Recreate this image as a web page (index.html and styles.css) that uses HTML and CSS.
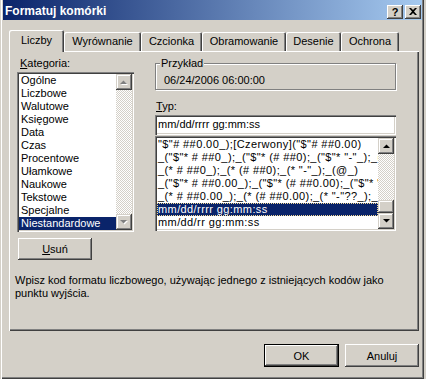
FILE: index.html
```html
<!DOCTYPE html>
<html lang="pl">
<head>
  <meta charset="UTF-8" />
  <title>Formatuj komórki</title>
  <link rel="stylesheet" href="styles.css">
</head>
<body>

  <div class="window">
    <div class="titlebar">
      <span class="title">Formatuj komórki</span>
      <div class="caption-buttons">
        <button class="caption-btn help">?</button>
        <button class="caption-btn close">
          <svg width="8" height="7" viewBox="0 0 8 7"><path d="M0 0h2l2 2 2-2h2L5 3.5 8 7H6L4 5 2 7H0l3-3.5z" fill="#000"/></svg>
        </button>
      </div>
    </div>

    <div class="content">
      <div class="tabs">
        <div class="tab active">Liczby</div>
        <div class="tab">Wyrównanie</div>
        <div class="tab">Czcionka</div>
        <div class="tab">Obramowanie</div>
        <div class="tab">Desenie</div>
        <div class="tab">Ochrona</div>
      </div>

      <div class="panel">
        <div class="panel-top">
          <div class="col-left">
            <div class="label label-cat"><u>K</u>ategoria:</div>
            <div class="listbox category">
              <ul class="items">
                <li>Ogólne</li>
                <li>Liczbowe</li>
                <li>Walutowe</li>
                <li>Księgowe</li>
                <li>Data</li>
                <li>Czas</li>
                <li>Procentowe</li>
                <li>Ułamkowe</li>
                <li>Naukowe</li>
                <li>Tekstowe</li>
                <li>Specjalne</li>
                <li class="selected">Niestandardowe</li>
              </ul>
              <div class="scrollbar disabled">
                <div class="scroll-btn">
                  <svg width="8" height="5" viewBox="0 0 8 5"><path d="M1 5h7L4.5 1.5z" fill="#fff"/><path d="M0 4h7L3.5 0.5z" fill="#808080"/></svg>
                </div>
                <div class="track"></div>
                <div class="scroll-btn">
                  <svg width="8" height="5" viewBox="0 0 8 5"><path d="M1 1h7L4.5 4.5z" fill="#fff"/><path d="M0 0h7L3.5 3.5z" fill="#808080"/></svg>
                </div>
              </div>
            </div>
            <button class="btn btn-usun"><u>U</u>suń</button>
          </div>

          <div class="col-right">
            <div class="group">
              <div class="group-label">Przykład</div>
              <div class="sample">06/24/2006 06:00:00</div>
            </div>
            <div class="label label-typ"><u>T</u>yp:</div>
            <div class="textbox">mm/dd/rrrr gg:mm:ss</div>
            <div class="listbox formats">
              <ul class="items">
                <li>"$"# ##0.00_);[Czerwony]("$"# ##0.00)</li>
                <li>_("$"* # ##0_);_("$"* (# ##0);_("$"* "-"_);_(@_)</li>
                <li>_(* # ##0_);_(* (# ##0);_(* "-"_);_(@_)</li>
                <li>_("$"* # ##0.00_);_("$"* (# ##0.00);_("$"* "-"??_);_(@_)</li>
                <li>_(* # ##0.00_);_(* (# ##0.00);_(* "-"??_);_(@_)</li>
                <li class="selected focused">mm/dd/rrrr gg:mm:ss</li>
                <li>mm/dd/rr gg:mm:ss</li>
              </ul>
              <div class="scrollbar">
                <div class="scroll-btn">
                  <svg width="7" height="4" viewBox="0 0 7 4"><path d="M0 4h7L3.5 0.5z" fill="#000"/></svg>
                </div>
                <div class="track"></div>
                <div class="thumb"></div>
                <div class="scroll-btn">
                  <svg width="7" height="4" viewBox="0 0 7 4"><path d="M0 0h7L3.5 3.5z" fill="#000"/></svg>
                </div>
              </div>
            </div>
          </div>
        </div>

        <p class="hint">Wpisz kod formatu liczbowego, używając jednego z istniejących kodów jako<br>punktu wyjścia.</p>
      </div>

      <div class="actions">
        <button class="btn btn-default">OK</button>
        <button class="btn btn-cancel">Anuluj</button>
      </div>
    </div>
  </div>

</body>
</html>
```

FILE: styles.css
```css
* {
  box-sizing: border-box;
}

body {
  margin: 0;
  background: #d4d0c8;
  font-family: "Liberation Sans", Arial, sans-serif;
  font-size: 11px;
  line-height: 13px;
  color: #000;
}

.window {
  width: 424px;
  height: 379px;
  background: #d4d0c8;
  box-shadow: inset 1px 0 #d4d0c8, inset 2px 0 #fff, inset -1px -1px #404040, inset -2px -2px #808080;
}

/* title bar */
.titlebar {
  height: 20px;
  margin: 0 2px 0 3px;
  padding: 0 1px 1px 2px;
  background: linear-gradient(to right, #0a246a, #a6caf0);
  display: flex;
  align-items: flex-end;
  justify-content: space-between;
}

.title {
  color: #fff;
  font-weight: bold;
  font-size: 12px;
  line-height: 14px;
  margin-bottom: 1px;
}

.caption-buttons {
  display: flex;
  gap: 2px;
}

.caption-btn {
  width: 16px;
  height: 14px;
  padding: 0;
  border: none;
  background: #d4d0c8;
  box-shadow: inset -1px -1px #404040, inset 1px 1px #fff, inset -2px -2px #808080;
  font-family: "Liberation Sans", Arial, sans-serif;
  font-weight: bold;
  font-size: 11px;
  line-height: 13px;
  display: flex;
  align-items: center;
  justify-content: center;
}

.caption-btn svg {
  display: block;
  margin-top: -1px;
}

/* tabs + panel */
.content {
  padding: 10px 5px 0 9px;
}

.tabs {
  display: flex;
  height: 21px;
}

.tab {
  height: 19px;
  margin-top: 2px;
  padding-top: 3px;
  text-align: center;
  background: #d4d0c8;
  border-radius: 2px 2px 0 0;
  box-shadow: inset 1px 1px #fff, inset -1px 0 #404040, inset -2px 0 #808080;
}

.tab:nth-child(1) { width: 55px; }
.tab:nth-child(2) { width: 77px; }
.tab:nth-child(3) { width: 61px; }
.tab:nth-child(4) { width: 84px; }
.tab:nth-child(5) { width: 55px; }
.tab:nth-child(6) { width: 58px; }

.tab.active {
  height: 22px;
  margin-top: 0;
  padding-top: 4px;
  position: relative;
  z-index: 1;
}

.panel {
  height: 280px;
  padding: 6px 0 0 6px;
  box-shadow: inset 1px 1px #fff, inset -1px -1px #404040, inset -2px -2px #808080;
}

.panel-top {
  display: flex;
}

.col-left {
  width: 117px;
  margin-left: 2px;
  display: flex;
  flex-direction: column;
  align-items: flex-start;
}

.col-right {
  width: 241px;
  margin-left: 21px;
}

.label {
  height: 13px;
}

.label-cat {
  padding-left: 3px;
  margin-bottom: 2px;
}

.label-typ {
  padding-left: 1px;
  margin-top: 10px;
}

/* list boxes */
.listbox {
  display: flex;
  width: 100%;
  padding: 2px;
  background: #fff;
  box-shadow: inset 1px 1px #808080, inset 2px 2px #404040, inset -1px -1px #fff, inset -2px -2px #d4d0c8;
}

.listbox.category {
  height: 160px;
}

.listbox.formats {
  height: 95px;
  margin-top: 1px;
}

.items {
  flex: 1;
  min-width: 0;
  margin: 0;
  padding: 0;
  list-style: none;
  overflow: hidden;
}

.items li {
  height: 13px;
  padding-left: 2px;
  white-space: nowrap;
}

.formats .items li {
  padding-left: 1px;
  letter-spacing: 0.4px;
}

.items li.selected {
  background: #0a246a;
  color: #fff;
}

.items li.focused {
  outline: 1px dotted #f5db95;
  outline-offset: -1px;
}

.scrollbar {
  width: 16px;
  display: flex;
  flex-direction: column;
}

.scroll-btn,
.thumb {
  height: 16px;
  flex-shrink: 0;
  background: #d4d0c8;
  box-shadow: inset -1px -1px #404040, inset 1px 1px #d4d0c8, inset -2px -2px #808080, inset 2px 2px #fff;
  display: flex;
  align-items: center;
  justify-content: center;
}

.scroll-btn svg {
  display: block;
}

.thumb {
  height: 13px;
}

.track {
  flex: 1;
  background-color: #fff;
  background-image: conic-gradient(#fff 25%, #d4d0c8 0 50%, #fff 0 75%, #d4d0c8 0);
  background-size: 2px 2px;
}

/* group box */
.group {
  margin-top: 6px;
  padding: 0 0 2px 0;
  border: 1px solid #808080;
  box-shadow: inset 1px 1px #fff, 1px 1px #fff;
}

.group-label {
  display: table;
  margin: -7px 0 0 4px;
  padding: 0 1px;
  background: #d4d0c8;
}

.sample {
  margin-top: 4px;
  padding-left: 8px;
}

.textbox {
  height: 20px;
  margin-top: 2px;
  padding: 3px 0 0 3px;
  background: #fff;
  box-shadow: inset 1px 1px #808080, inset 2px 2px #404040, inset -1px -1px #fff, inset -2px -2px #d4d0c8;
  white-space: nowrap;
}

/* buttons */
.btn {
  height: 23px;
  padding: 0;
  border: none;
  background: #d4d0c8;
  font-family: "Liberation Sans", Arial, sans-serif;
  font-size: 11px;
  color: #000;
  box-shadow: inset -1px -1px #404040, inset 1px 1px #fff, inset -2px -2px #808080, inset 2px 2px #d4d0c8;
}

.btn-usun {
  width: 74px;
  height: 22px;
  margin: 6px 0 0 1px;
}

.btn-default {
  width: 75px;
  box-shadow: inset 0 0 0 1px #000, inset -2px -2px #404040, inset 2px 2px #fff, inset -3px -3px #808080;
}

.btn-cancel {
  width: 74px;
}

.hint {
  margin: 14px 0 0 0;
  line-height: 13px;
}

.actions {
  display: flex;
  justify-content: flex-end;
  gap: 6px;
  margin-top: 13px;
}
```
